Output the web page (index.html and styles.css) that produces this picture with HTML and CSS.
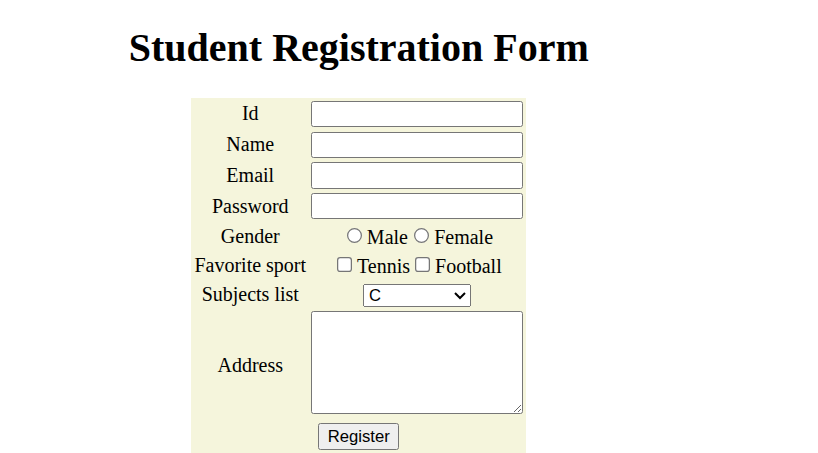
FILE: index.html
```html
<!DOCTYPE html>
<html>
<head>
<meta charset="utf-8">
<title>Student Registration Form</title>
<link rel="stylesheet" href="styles.css">
</head>
<body>
<div class="wrap">
  <h1 class="title">Student Registration Form</h1>
  <form class="form">
    <table class="reg">
      <tr><td class="lbl">Id</td><td><input type="text" class="field"></td></tr>
      <tr><td class="lbl">Name</td><td><input type="text" class="field"></td></tr>
      <tr><td class="lbl">Email</td><td><input type="text" class="field"></td></tr>
      <tr><td class="lbl">Password</td><td><input type="password" class="field"></td></tr>
      <tr><td class="lbl">Gender</td><td class="opts"><input type="radio" name="g">Male<input type="radio" name="g">Female</td></tr>
      <tr><td class="lbl">Favorite sport</td><td class="opts"><input type="checkbox">Tennis<input type="checkbox">Football</td></tr>
      <tr><td class="lbl">Subjects list</td><td class="opts"><select class="subj"><option>C</option><option>C++</option><option>Java</option></select></td></tr>
      <tr><td class="lbl">Address</td><td><textarea class="addr"></textarea></td></tr>
      <tr><td colspan="2" class="opts"><input type="submit" value="Register" class="btn"></td></tr>
    </table>
  </form>
</div>
</body>
</html>
```

FILE: styles.css
```css
html {
  zoom: 1.25;
}
body {
  margin: 8px;
  font-family: "Liberation Serif", "Times New Roman", serif;
  font-size: 16px;
  color: #000;
  background: #fff;
}
.wrap {
  width: 558px;
  text-align: center;
}
.title {
  font-size: 32px;
  font-weight: bold;
  margin: 11px 0 21.44px;
}
.form {
  margin: 0;
}
.reg {
  margin: 0 auto;
  background: #f5f5dc;
  border-spacing: 2px;
  text-align: center;
}
.reg td {
  padding: 1px;
  vertical-align: middle;
}
.field {
  font-family: "Liberation Sans", Arial, sans-serif;
  font-size: 13.33px;
  width: 170px;
  height: 21px;
  box-sizing: border-box;
  padding: 1px 2px;
  border: 1px solid #767676;
  border-radius: 2px;
  margin: 0;
  background: #fff;
}
.subj {
  font-family: "Liberation Sans", Arial, sans-serif;
  font-size: 13.33px;
  width: 86px;
  margin: 0;
}
.addr {
  width: 170px;
  height: 82px;
  box-sizing: border-box;
  margin: 0;
  border: 1px solid #767676;
  border-radius: 2px;
  resize: both;
}
.btn {
  font-family: "Liberation Sans", Arial, sans-serif;
  font-size: 13.33px;
  margin: 0;
}
```
